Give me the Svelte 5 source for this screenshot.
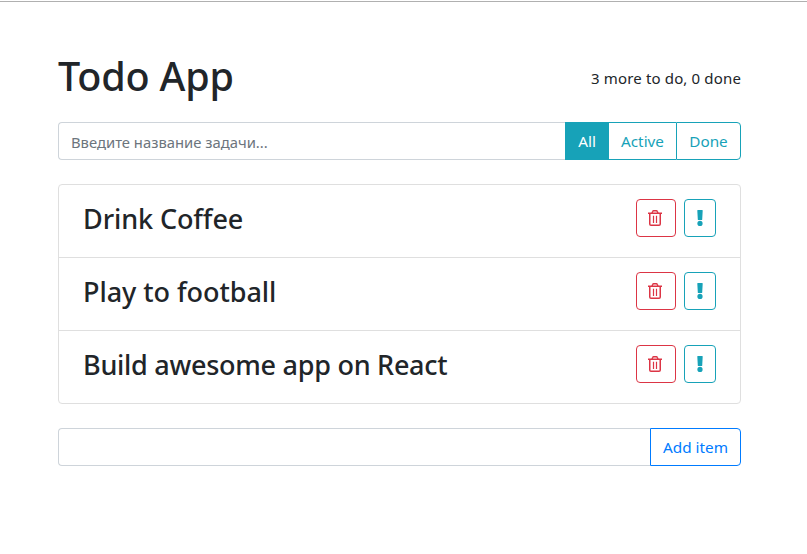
<script>
  let filter = $state('All');
  const filters = ['All', 'Active', 'Done'];
  const items = [
    { label: 'Drink Coffee', spacing: -0.1 },
    { label: 'Play to football', spacing: -0.05 },
    { label: 'Build awesome app on React', spacing: -0.27 }
  ];
</script>

<div class="topline"></div>
<main>
  <header>
    <h1>Todo App</h1>
    <h2>3 more to do, 0 done</h2>
  </header>
  <div class="search">
    <input class="field" type="text" placeholder="Введите название задачи..." />
    <div class="group">
      {#each filters as f}
        <button class="btn info {f.toLowerCase()}" class:selected={filter === f} onclick={() => (filter = f)}><span>{f}</span></button>
      {/each}
    </div>
  </div>
  <ul>
    {#each items as item}
      <li>
        <span class="label" style="letter-spacing: {item.spacing}px">{item.label}</span>
        <button class="icon danger" aria-label="Delete">
          <svg width="14" height="16" viewBox="0 0 14 16" fill="none" stroke="currentColor">
            <path d="M4 3 L4.7 1.5 Q5 .8 5.6 .8 H8.4 Q9 .8 9.3 1.5 L10 3" stroke-width="1.5" />
            <path d="M0 3.25 H14" stroke-width="1.5" />
            <path d="M1.75 4 V14 Q1.75 15.25 3 15.25 H11 Q12.25 15.25 12.25 14 V4" stroke-width="1.5" />
            <path d="M5.5 5.7 V13 M8.5 5.7 V13" stroke-width="1.2" />
          </svg>
        </button>
        <button class="icon mark" aria-label="Important">
          <svg width="6" height="16" viewBox="0 0 6 16" fill="currentColor">
            <path d="M.8 0 H5.2 Q5.7 0 5.7 .5 L5.2 9.5 Q5.2 10 4.7 10 H1.3 Q.8 10 .8 9.5 L.3 .5 Q.3 0 .8 0Z" />
            <circle cx="3" cy="13.4" r="2.6" />
          </svg>
        </button>
      </li>
    {/each}
  </ul>
  <form onsubmit={(e) => e.preventDefault()}>
    <input class="field" type="text" aria-label="New item" />
    <button class="btn primary"><span>Add item</span></button>
  </form>
</main>

<style>
  :global(body) { background: #fff; }
  * { box-sizing: border-box; }
  .topline { height: 2px; border-bottom: 1px solid #b0b0b0; }
  main { width: 683px; margin: 0 auto 0 58px; padding-top: 50px; color: #212529; font-family: "Segoe UI", "Noto Sans", "Open Sans", sans-serif; }
  header { display: flex; align-items: flex-end; justify-content: space-between; height: 54px; }
  h1 { margin: 0 0 6px; font-size: 39.5px; line-height: 48px; font-weight: 500; letter-spacing: -.2px; white-space: nowrap; }
  h2 { margin: 0 0 16px; font-size: 15px; line-height: 24px; font-weight: 400; letter-spacing: .15px; white-space: nowrap; }
  .search { display: flex; margin-top: 16px; height: 38px; }
  .field { flex: 1; min-width: 0; height: 38px; margin: 0; padding: 4px 12px 3px; border: 1px solid #ced4da; border-right: 0; border-radius: 4px 0 0 4px; outline: 0; background: #fff; font-family: inherit; font-size: 14.8px; color: #495057; }
  .field::placeholder { color: #6c757d; opacity: 1; }
  .group { display: flex; }
  button { margin: 0; padding: 0; background: #fff; font-family: inherit; white-space: nowrap; }
  .btn { height: 38px; border: 1px solid currentColor; font-size: 15.3px; line-height: 24px; }
  .info { color: #17a2b8; }
  .all { width: 44px; }
  .active { width: 67px; border-left: 0; border-right: 0; }
  .done { width: 65px; border-radius: 0 4px 4px 0; }
  .selected { background: #17a2b8; border-color: #17a2b8; color: #fff; }
  ul { list-style: none; margin: 24px 0; padding: 0; border: 1px solid #dfdfdf; border-radius: 4px; }
  li { display: flex; align-items: flex-start; height: 73px; padding: 14px 24px 0; }
  li + li { border-top: 1px solid #dfdfdf; }
  li:first-child { height: 72px; }
  .label { flex: 1; font-size: 27px; line-height: 40px; font-weight: 500; white-space: nowrap; }
  .icon { display: flex; align-items: center; justify-content: center; height: 38px; border: 1px solid currentColor; border-radius: 4px; }
  .danger { width: 40px; padding-right: 2px; color: #dc3545; }
  .mark { width: 32px; margin-left: 8px; padding-right: 1px; color: #17a2b8; }
  form { display: flex; }
  .primary { width: 91px; color: #007bff; border-radius: 0 4px 4px 0; }
</style>
